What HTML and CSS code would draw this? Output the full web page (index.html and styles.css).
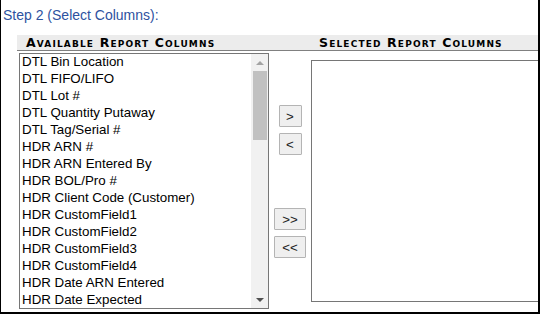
FILE: index.html
```html
<html lang="en">
  <head>
    <meta charset="utf-8">
    <title>Report Columns</title>
    <link rel="stylesheet" href="styles.css">
  </head>

  <body>
    <div class="panel">
      <div class="step">Step 2 (Select Columns):</div>

      <div class="col-heads">
        <span class="head head-left">Available Report Columns</span>
        <span class="head">Selected Report Columns</span>
      </div>

      <div class="picker">
        <div class="listbox list-available">
          <select class="list" multiple>
            <option>DTL Bin Location</option>
            <option>DTL FIFO/LIFO</option>
            <option>DTL Lot #</option>
            <option>DTL Quantity Putaway</option>
            <option>DTL Tag/Serial #</option>
            <option>HDR ARN #</option>
            <option>HDR ARN Entered By</option>
            <option>HDR BOL/Pro #</option>
            <option>HDR Client Code (Customer)</option>
            <option>HDR CustomField1</option>
            <option>HDR CustomField2</option>
            <option>HDR CustomField3</option>
            <option>HDR CustomField4</option>
            <option>HDR Date ARN Entered</option>
            <option>HDR Date Expected</option>
            <option>HDR Date Received</option>
            <option>HDR Date Putaway</option>
            <option>HDR Carrier</option>
            <option>HDR Container #</option>
            <option>HDR Notes</option>
            <option>HDR PO #</option>
            <option>HDR Reference #</option>
            <option>HDR Status</option>
            <option>HDR Supplier</option>
            <option>ITM Description</option>
            <option>ITM Item #</option>
            <option>ITM UOM</option>
          </select>
          <div class="scrollbar">
            <div class="sb-button"><span class="arrow-up"></span></div>
            <div class="sb-track"><div class="sb-thumb"></div></div>
            <div class="sb-button"><span class="arrow-down"></span></div>
          </div>
        </div>

        <div class="moves">
          <button class="move" type="button">&gt;</button>
          <button class="move near" type="button">&lt;</button>
          <button class="move wide far" type="button">&gt;&gt;</button>
          <button class="move wide near" type="button">&lt;&lt;</button>
        </div>

        <div class="listbox list-selected">
          <select class="list" multiple></select>
        </div>
      </div>
    </div>
  </body>
</html>
```

FILE: styles.css
```css
body {
  margin: 0;
  font-family: "Liberation Sans", Arial, Helvetica, sans-serif;
}

.panel {
  width: 540px;
  height: 314px;
  box-sizing: border-box;
  border: 2px solid #000;
  border-top: none;
  border-left-width: 1px;
  overflow: hidden;
}

.step {
  color: #2e52a0;
  font-size: 14px;
  line-height: 16px;
  padding: 7px 0 0 2px;
}

.col-heads {
  display: flex;
  height: 15px;
  margin: 12px 0 0 16px;
  background-color: #ececec;
  border-bottom: 1px solid #808080;
}

.head {
  font-family: "DejaVu Sans", sans-serif;
  font-weight: bold;
  font-variant: small-caps;
  font-size: 12.5px;
  letter-spacing: 1.15px;
  line-height: 15px;
  color: #000;
  white-space: nowrap;
}

.head-left {
  width: 302px;
  padding-left: 9px;
  box-sizing: border-box;
}

.picker {
  display: flex;
  align-items: flex-start;
  margin: 2px 0 0 18px;
}

.listbox {
  display: flex;
  flex: none;
  box-sizing: border-box;
  border: 1px solid #767676;
  background-color: #fff;
}

.list-available {
  width: 250px;
  height: 256px;
}

.list-selected {
  width: 240px;
  height: 242px;
  margin-top: 7px;
}

.list {
  flex: 1;
  min-width: 0;
  height: 100%;
  font-family: "Liberation Sans", Arial, sans-serif;
  font-size: 13.33px;
  color: #000;
  border: none;
  padding: 0;
  margin: 0;
  outline: none;
  overflow: hidden;
}

.list option {
  padding: 0 2px 1px;
  line-height: 16px;
}

.scrollbar {
  width: 17px;
  display: flex;
  flex-direction: column;
  background-color: #f1f1f1;
}

.sb-button {
  height: 17px;
  display: flex;
  align-items: center;
  justify-content: center;
}

.arrow-up {
  border-left: 4px solid transparent;
  border-right: 4px solid transparent;
  border-bottom: 4px solid #a3a3a3;
}

.arrow-down {
  border-left: 4px solid transparent;
  border-right: 4px solid transparent;
  border-top: 4px solid #505050;
}

.sb-track {
  flex: 1;
}

.sb-thumb {
  height: 69px;
  margin: 0 1px 0 2px;
  background-color: #c1c1c1;
}

.moves {
  width: 42px;
  flex: none;
  display: flex;
  flex-direction: column;
  align-items: center;
  padding-top: 52px;
}

.move {
  width: 23px;
  height: 22px;
  padding: 0;
  font-family: "Liberation Sans", Arial, sans-serif;
  font-size: 13.33px;
  color: #222;
  background-color: #efefef;
  border: 1px solid #b4b4b4;
  border-radius: 1px;
}

.move.wide {
  width: 32px;
}

.move.near {
  margin-top: 6px;
}

.move.far {
  margin-top: 53px;
}
```
